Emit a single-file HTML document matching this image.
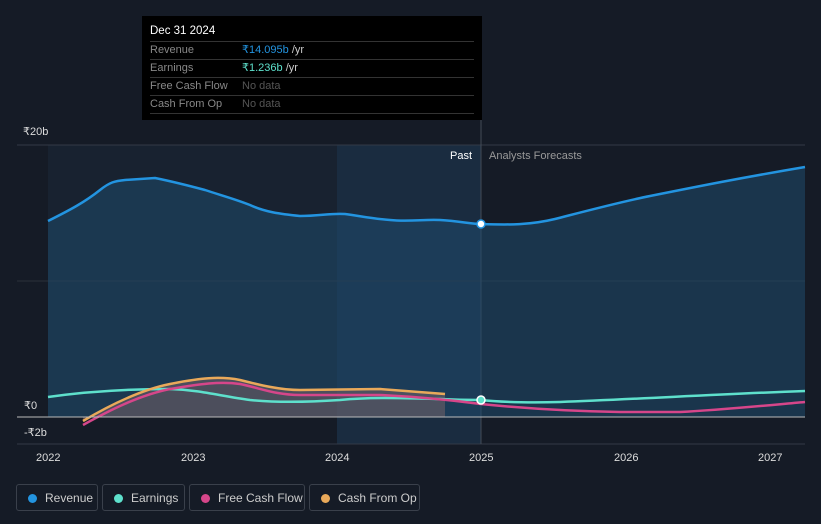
<!DOCTYPE html><html><head><style>
body{margin:0;background:#151b26;font-family:"Liberation Sans",sans-serif;width:821px;height:524px;overflow:hidden;position:relative}
.tt{position:absolute;left:142px;top:16px;width:340px;height:104px;background:#000;font-size:11px}
.tt .h{color:#fff;padding:9px 8px 4px;font-size:11.5px}
.tt .r{display:flex;margin:0 8px;border-top:1px solid #333;height:17px;line-height:17px;color:#888}
.tt .r span:first-child{width:92px}
.tt .last{border-bottom:1px solid #333;margin:0 8px}
.lg{position:absolute;top:484px;height:27px;border:1px solid #3a404b;border-radius:3px;color:#ccc;font-size:12px;line-height:27px;padding-left:28px;box-sizing:border-box}
.lg i{position:absolute;left:11px;top:9px;width:9px;height:9px;border-radius:50%}
.ax{position:absolute;color:#ddd;font-size:11px}
</style></head><body>
<svg width="821" height="524" style="position:absolute;left:0;top:0">
<rect x="48" y="145" width="289" height="272" fill="#182230"/>
<rect x="337" y="145" width="144" height="299" fill="#1a2c40"/>
<line x1="17" y1="145" x2="805" y2="145" stroke="#333a46"/>
<line x1="17" y1="281" x2="805" y2="281" stroke="#2a303b"/>
<line x1="17" y1="444" x2="805" y2="444" stroke="#333a46"/>
<line x1="481" y1="120" x2="481" y2="444" stroke="#444b57"/>
<path d="M48,221 C70,210 85,202 100,190 C110,182 115,181 125,180 L155,178 C175,182 190,186 205,190 C220,195 235,199 250,205 C265,212 280,214 300,216 C320,216 330,213 345,214 C360,216 375,219 390,220 C410,222 425,219 440,220 C460,221 470,224 481,224 C510,225 530,225 555,219 C590,210 620,202 650,196 C700,186 740,178 805,167 L805,417 L48,417 Z" fill="#1f4a6b" fill-opacity=".55"/>
<path d="M48,221 C70,210 85,202 100,190 C110,182 115,181 125,180 L155,178 C175,182 190,186 205,190 C220,195 235,199 250,205 C265,212 280,214 300,216 C320,216 330,213 345,214 C360,216 375,219 390,220 C410,222 425,219 440,220 C460,221 470,224 481,224 C510,225 530,225 555,219 C590,210 620,202 650,196 C700,186 740,178 805,167" fill="none" stroke="#2394e0" stroke-width="2.5"/>
<path d="M83,421 C110,405 140,390 170,384 C200,378 220,376 240,380 C260,385 280,390 300,390 L380,389 L445,394 L445,417 L83,417Z" fill="#8a6a6a" fill-opacity=".45"/>
<path d="M48,397 C90,391 130,389 170,389 C200,390 220,396 250,400 C280,403 310,402 340,400 C370,397 400,398 440,399 C460,400 470,400 481,400 C500,402 520,403 560,402 C640,399 720,394 805,391" fill="none" stroke="#5ee0cc" stroke-width="2.5"/>
<path d="M83,425 C110,410 140,395 170,389 C200,384 220,381 240,384 C260,388 275,395 300,395 L380,395 C420,397 450,400 481,404 C520,408 560,411 620,412 L680,412 C720,410 760,406 805,402" fill="none" stroke="#d6468a" stroke-width="2.5"/>
<path d="M83,421 C110,405 140,390 170,384 C200,378 220,376 240,380 C260,385 280,390 300,390 L380,389 L445,394" fill="none" stroke="#e9a95a" stroke-width="2.5"/>
<line x1="17" y1="417" x2="805" y2="417" stroke="#bbb" stroke-width="1"/>
<circle cx="481" cy="224" r="4" fill="#fff" stroke="#2394e0" stroke-width="1.5"/>
<circle cx="481" cy="400" r="4" fill="#5ee0cc" stroke="#fff" stroke-width="1.5"/>
</svg>
<div class="ax" style="left:23px;top:125px">₹20b</div>
<div class="ax" style="left:24px;top:399px">₹0</div>
<div class="ax" style="left:24px;top:426px">-₹2b</div>
<div class="ax" style="left:450px;top:150px;color:#fff">Past</div>
<div class="ax" style="left:489px;top:150px;color:#999">Analysts Forecasts</div>
<div class="ax" style="left:36px;top:452px">2022</div>
<div class="ax" style="left:181px;top:452px">2023</div>
<div class="ax" style="left:325px;top:452px">2024</div>
<div class="ax" style="left:469px;top:452px">2025</div>
<div class="ax" style="left:614px;top:452px">2026</div>
<div class="ax" style="left:758px;top:452px">2027</div>
<div class="tt"><div class="h">Dec 31 2024</div>
<div class="r"><span>Revenue</span><span><b style="font-weight:normal;color:#2394e0">₹14.095b</b> <span style="color:#ccc">/yr</span></span></div>
<div class="r"><span>Earnings</span><span><b style="font-weight:normal;color:#5ee0cc">₹1.236b</b> <span style="color:#ccc">/yr</span></span></div>
<div class="r"><span>Free Cash Flow</span><span style="color:#555">No data</span></div>
<div class="r"><span>Cash From Op</span><span style="color:#555">No data</span></div>
<div class="last"></div></div>
<div class="lg" style="left:16px;width:82px"><i style="background:#2394e0"></i>Revenue</div>
<div class="lg" style="left:102px;width:83px"><i style="background:#5ee0cc"></i>Earnings</div>
<div class="lg" style="left:189px;width:116px"><i style="background:#d6468a"></i>Free Cash Flow</div>
<div class="lg" style="left:309px;width:111px"><i style="background:#e9a95a"></i>Cash From Op</div>
</body></html>
